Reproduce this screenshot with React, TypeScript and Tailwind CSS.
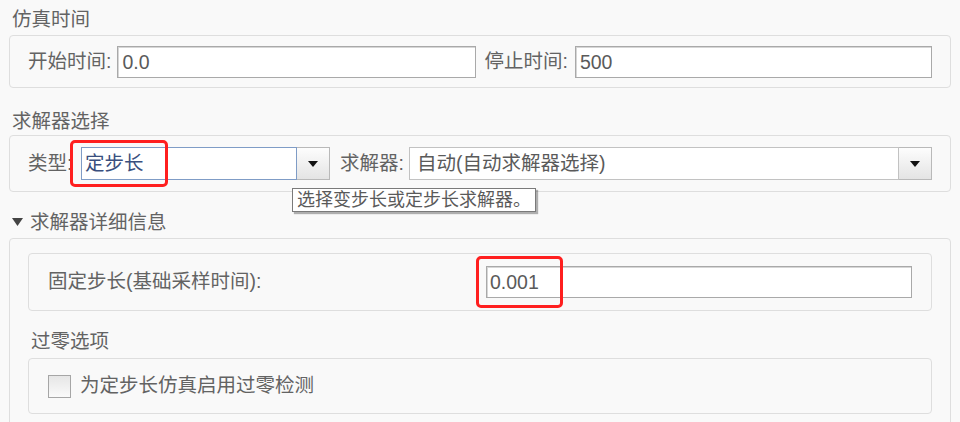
import type { ReactNode } from "react";

const font = "font-['Liberation_Sans','Noto_Sans_CJK_SC',sans-serif]";

function Group({ children, className = "" }: { children: ReactNode; className?: string }) {
  return (
    <div className={`rounded-[4px] border border-[#dedede] bg-[#f9f9f9] ${className}`}>{children}</div>
  );
}

function Title({ children, className = "" }: { children: ReactNode; className?: string }) {
  return <div className={`h-[28px] pl-[3px] leading-[28px] text-[#636363] ${className}`}>{children}</div>;
}

function TextField({ value }: { value: string }) {
  return (
    <div className="h-[32px] flex-1 border border-[#a9a9a9] bg-white pl-[4px] leading-[30px] text-[#5a5a5a] shadow-[inset_1px_1px_0_#d6d6d6]">
      {value}
    </div>
  );
}

function Arrow() {
  return (
    <div className="flex h-full w-[33px] shrink-0 items-center justify-center border border-l-0 border-[#b9b9b9] bg-gradient-to-b from-[#fdfdfd] to-[#e4e4e4]">
      <svg width="10" height="6" viewBox="0 0 10 6">
        <path d="M0 0h10L5 6z" fill="#111" />
      </svg>
    </div>
  );
}

export default function App() {
  return (
    <div className={`relative h-[422px] w-[960px] overflow-hidden bg-[#f9f9f9] px-[9px] text-[19.5px] ${font}`}>
      <Title className="mt-[5px]">仿真时间</Title>
      <Group className="mt-[2px] flex h-[53px] items-center gap-[9px] px-[18px]">
        <div className="flex flex-1 items-center gap-[6px]">
          <span className="text-[#636363]">开始时间:</span>
          <TextField value="0.0" />
        </div>
        <div className="flex flex-1 items-center gap-[7px]">
          <span className="text-[#636363]">停止时间:</span>
          <TextField value="500" />
        </div>
      </Group>

      <Title className="mt-[19px]">求解器选择</Title>
      <Group className="flex h-[57px] items-center px-[18px]">
        <span className="w-[53px] shrink-0 text-[#636363]">类型:</span>
        <div className="flex h-[33px] w-[249px] shrink-0">
          <div className="flex-1 border border-[#7f9cc6] bg-white pl-[3px] leading-[31px] text-[#3a4f7e]">定步长</div>
          <Arrow />
        </div>
        <span className="ml-[10px] w-[69px] shrink-0 text-[#636363]">求解器:</span>
        <div className="flex h-[33px] flex-1">
          <div className="flex-1 border border-[#c2c2c2] bg-white pl-[7px] leading-[31px] text-[#5a5a5a]">
            自动(自动求解器选择)
          </div>
          <Arrow />
        </div>
      </Group>

      <div className="mt-[16px] flex h-[28px] items-center pl-[3px] text-[#636363]">
        <svg width="11" height="8" viewBox="0 0 11 8" className="mr-[7px]">
          <path d="M0 0h11L5.5 8z" fill="#444" />
        </svg>
        <span className="leading-[28px]">求解器详细信息</span>
      </div>
      <Group className="mt-[2px] h-[200px] px-[18px] pt-[14px]">
        <div className="flex h-[58px] items-center rounded-[4px] border border-[#dedede] px-[19px]">
          <span className="flex-1 text-[#636363]">固定步长(基础采样时间):</span>
          <div className="h-[32px] w-[426px] border border-[#a9a9a9] bg-white pl-[3px] leading-[30px] text-[#5a5a5a] shadow-[inset_1px_1px_0_#d6d6d6]">
            0.001
          </div>
        </div>
        <Title className="mt-[16px] pl-[1px]">过零选项</Title>
        <div className="mt-[3px] flex h-[56px] items-center gap-[9px] rounded-[4px] border border-[#dedede] px-[19px]">
          <div className="h-[23px] w-[23px] border border-[#a6a6a6] bg-gradient-to-b from-[#e6e6e6] to-[#fafafa]" />
          <span className="text-[#636363]">为定步长仿真启用过零检测</span>
        </div>
      </Group>

      <div className="absolute left-[292px] top-[188px] h-[24px] border border-[#7a7a7a] bg-white px-[4px] text-[18px] leading-[22px] text-[#5a5a5a] shadow-[2px_2px_1px_rgba(0,0,0,0.3)]">
        选择变步长或定步长求解器。
      </div>

      <div className="absolute left-[70px] top-[140px] h-[47px] w-[98px] rounded-[5px] border-[3px] border-[#ff1f1f]" />
      <div className="absolute left-[476px] top-[256px] h-[52px] w-[87px] rounded-[5px] border-[3px] border-[#ff1f1f]" />
    </div>
  );
}
